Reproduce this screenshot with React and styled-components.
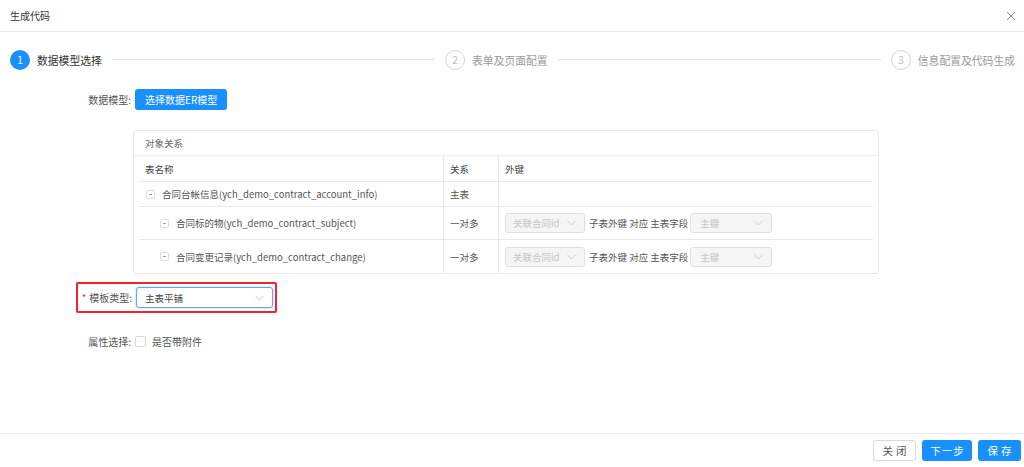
import styled, { createGlobalStyle, css } from "styled-components";

const GlobalStyle = createGlobalStyle`
  html, body {
    margin: 0;
    padding: 0;
    background: #fff;
  }
  body {
    font-family: "Noto Sans CJK SC", "Noto Sans", sans-serif;
    color: #333;
  }
`

const Dialog = styled.div`
  width: 1024px;
  height: 467px;
  display: flex;
  flex-direction: column;
  box-sizing: border-box;
`

const Header = styled.div`
  height: 32px;
  flex: none;
  display: flex;
  align-items: center;
  justify-content: space-between;
  padding: 0 6px 0 10px;
  border-bottom: 1px solid #ebebeb;
  box-sizing: border-box;
`

const Title = styled.span`
  font-size: 10px;
  color: #333;
`

const CloseBtn = styled.span`
  width: 14px;
  height: 14px;
  display: flex;
  align-items: center;
  justify-content: center;
`

const Steps = styled.div`
  display: flex;
  align-items: center;
  padding: 17px 9px 0 10px;
  height: 21px;
`

const Step = styled.div`
  display: flex;
  align-items: center;
  flex: none;
`

const StepDot = styled.span`
  width: 20px;
  height: 20px;
  border-radius: 50%;
  box-sizing: border-box;
  display: flex;
  align-items: center;
  justify-content: center;
  font-size: 10px;
  ${p => p.active ? css`
    background: #1890ff;
    color: #fff;
  ` : css`
    border: 1px solid #d3d3d3;
    color: #bbb;
  `}
`

const StepText = styled.span`
  margin-left: 7px;
  font-size: 10.8px;
  color: ${p => p.active ? '#333' : '#999'};
`

const StepLine = styled.span`
  flex: 1;
  height: 1px;
  background: #e3e3e3;
  margin: 0 10px;
`

const Body = styled.div`
  flex: 1;
  display: flex;
  flex-direction: column;
`

const FormRow = styled.div`
  display: flex;
  align-items: center;
  margin-top: ${p => p.mt || 0};
`

const Label = styled.span`
  width: ${p => p.auto ? 'auto' : '131px'};
  flex: none;
  text-align: right;
  font-size: 10px;
  color: #555;
  padding-right: 4px;
  box-sizing: content-box;
`

const PrimaryButton = styled.button`
  font-family: inherit;
  border: none;
  outline: none;
  background: #1890ff;
  color: #fff;
  border-radius: 3px;
  height: 21px;
  width: ${p => p.w || 'auto'};
  padding: 0 ${p => p.w ? 0 : '10px'};
  font-size: ${p => p.fs || '10px'};
  letter-spacing: ${p => p.ls || 0};
  text-indent: ${p => p.ls || 0};
  cursor: pointer;
  display: flex;
  align-items: center;
  justify-content: center;
`

const DefaultButton = styled(PrimaryButton)`
  background: #fff;
  color: #555;
  border: 1px solid #d9d9d9;
`

const Card = styled.div`
  margin: 20px 0 0 133px;
  width: 746px;
  border: 1px solid #e8e8e8;
  border-radius: 3px;
  box-sizing: border-box;
`

const CardHead = styled.div`
  height: 24px;
  display: flex;
  align-items: center;
  padding-left: 11px;
  font-size: 9.5px;
  color: #666;
  border-bottom: 1px solid #ececec;
`

const Table = styled.div`
  margin: 0 5px 0 5px;
  display: grid;
  grid-template-columns: 305px 55px 1fr;
`

const Cell = styled.div`
  display: flex;
  align-items: center;
  height: ${p => p.h || '24px'};
  padding-left: ${p => p.pl || '6px'};
  font-size: 9.5px;
  color: ${p => p.head ? '#444' : '#555'};
  border-bottom: ${p => p.last ? 'none' : '1px solid #e8e8e8'};
  border-right: ${p => p.sep ? '1px solid #e8e8e8' : 'none'};
  box-sizing: border-box;
  white-space: nowrap;
`

const Toggle = styled.span`
  width: 9px;
  height: 9px;
  border: 1px solid #ddd;
  border-radius: 2px;
  box-sizing: border-box;
  display: inline-flex;
  align-items: center;
  justify-content: center;
  margin-right: 7px;

  &::after {
    content: "";
    width: 3px;
    height: 1px;
    background: #999;
  }
`

const Select = styled.div`
  width: ${p => p.w};
  height: ${p => p.h || '20px'};
  box-sizing: border-box;
  border: 1px solid ${p => p.focus ? '#5aa9f5' : '#e0e0e0'};
  border-radius: 3px;
  background: ${p => p.disabled ? '#f5f5f5' : '#fff'};
  box-shadow: ${p => p.focus ? '0 0 0 1px rgba(24,144,255,0.15)' : 'none'};
  display: flex;
  align-items: center;
  justify-content: space-between;
  padding: 0 8px 0 ${p => p.pl || '7px'};
  font-size: 9.5px;
  color: ${p => p.disabled ? '#c4c4c4' : '#444'};
  flex: none;
`

const FkText = styled.span`
  font-size: 9.5px;
  color: #555;
  margin: 0 2px 0 4px;
`

const Highlight = styled.div`
  margin: 8px 0 0 76px;
  width: 201px;
  height: 31px;
  border: 2px solid #f5222d;
  border-radius: 2px;
  box-sizing: border-box;
  display: flex;
  align-items: center;
`

const Req = styled.span`
  color: #f5222d;
  font-size: 9px;
  margin: 0 3px 0 4px;
`

const Checkbox = styled.span`
  width: 11px;
  height: 11px;
  border: 1px solid #d9d9d9;
  border-radius: 2px;
  box-sizing: border-box;
  margin-right: 6px;
`

const CheckText = styled.span`
  font-size: 10px;
  color: #555;
`

const Footer = styled.div`
  height: 34px;
  flex: none;
  border-top: 1px solid #e8e8e8;
  display: flex;
  align-items: center;
  justify-content: flex-end;
  gap: 6px;
  padding: 0 3px 0 0;
  box-sizing: border-box;
`

const Chevron = ({ color = '#bbb' }) => (
  <svg width="9" height="6" viewBox="0 0 9 6" fill="none">
    <path d="M0.5 0.8 L4.5 5 L8.5 0.8" stroke={color} strokeWidth="0.9" />
  </svg>
)

const rows = [
  { name: '合同台帐信息(ych_demo_contract_account_info)', rel: '主表', indent: 0, fk: false },
  { name: '合同标的物(ych_demo_contract_subject)', rel: '一对多', indent: 1, fk: true },
  { name: '合同变更记录(ych_demo_contract_change)', rel: '一对多', indent: 1, fk: true },
]

export default function App() {
  return (
    <Dialog>
      <GlobalStyle />
      <Header>
        <Title>生成代码</Title>
        <CloseBtn>
          <svg width="10" height="10" viewBox="0 0 10 10">
            <path d="M1 1 L9 9 M9 1 L1 9" stroke="#888" strokeWidth="1" />
          </svg>
        </CloseBtn>
      </Header>

      <Body>
        <Steps>
          <Step>
            <StepDot active>1</StepDot>
            <StepText active>数据模型选择</StepText>
          </Step>
          <StepLine />
          <Step>
            <StepDot>2</StepDot>
            <StepText>表单及页面配置</StepText>
          </Step>
          <StepLine />
          <Step>
            <StepDot>3</StepDot>
            <StepText>信息配置及代码生成</StepText>
          </Step>
        </Steps>

        <FormRow mt="19px">
          <Label>数据模型:</Label>
          <PrimaryButton>选择数据ER模型</PrimaryButton>
        </FormRow>

        <Card>
          <CardHead>对象关系</CardHead>
          <Table>
            <Cell head sep h="26px">表名称</Cell>
            <Cell head sep h="26px">关系</Cell>
            <Cell head h="26px">外键</Cell>
            {rows.map((r, i) => {
              const h = r.fk ? '33px' : '25px'
              const last = i === rows.length - 1
              return [
                <Cell key={i + 'n'} sep last={last} h={h} pl={r.indent ? '21px' : '7px'}>
                  <Toggle />
                  {r.name}
                </Cell>,
                <Cell key={i + 'r'} sep last={last} h={h}>{r.rel}</Cell>,
                <Cell key={i + 'f'} last={last} h={h}>
                  {r.fk && (
                    <>
                      <Select disabled w="80px">关联合同id<Chevron color="#c8c8c8" /></Select>
                      <FkText>子表外键 对应 主表字段</FkText>
                      <Select disabled w="82px" pl="9px">主键<Chevron color="#c8c8c8" /></Select>
                    </>
                  )}
                </Cell>,
              ]
            })}
          </Table>
        </Card>

        <Highlight>
          <Req>*</Req>
          <Label auto>模板类型:</Label>
          <Select focus w="137px" h="21px" pl="8px">主表平铺<Chevron /></Select>
        </Highlight>

        <FormRow mt="21px">
          <Label>属性选择:</Label>
          <Checkbox />
          <CheckText>是否带附件</CheckText>
        </FormRow>
      </Body>

      <Footer>
        <DefaultButton w="43px" ls="3px" fs="10.5px">关闭</DefaultButton>
        <PrimaryButton w="50px" fs="10.5px" ls="1px">下一步</PrimaryButton>
        <PrimaryButton w="43px" ls="3px" fs="10.5px">保存</PrimaryButton>
      </Footer>
    </Dialog>
  )
}
